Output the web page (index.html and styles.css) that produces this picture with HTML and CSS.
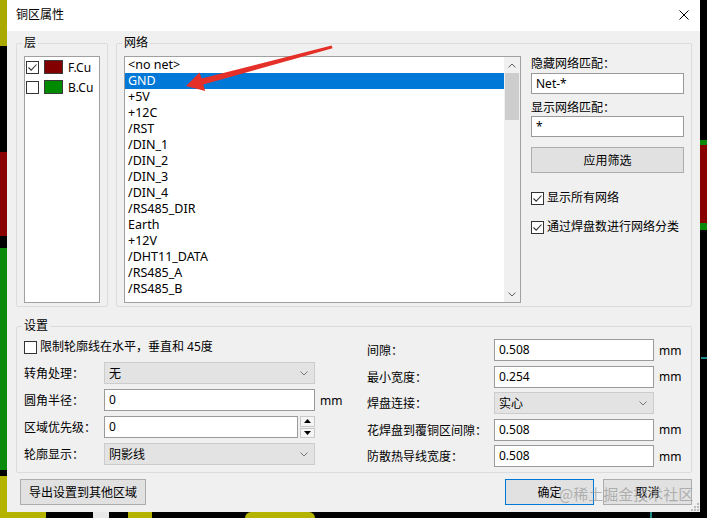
FILE: index.html
```html
<!DOCTYPE html>
<html lang="zh-CN">
<head>
    <meta charset="UTF-8">
    <meta name="viewport" content="width=device-width, initial-scale=1.0">
    <title>铜区属性</title>
    <link rel="stylesheet" href="styles.css">
</head>
<body>
    <!-- PCB canvas peeking out behind the dialog -->
    <div class="pcb">
        <div class="copper y-top-left"></div>
        <div class="copper r-left"></div>
        <div class="copper g-left"></div>
        <div class="copper y-bottom-left"></div>
        <div class="copper y-bottom-1"></div>
        <div class="copper w-bottom"></div>
        <div class="copper y-bottom-2"></div>
        <div class="copper y-bottom-3"></div>
        <div class="copper t-bottom"></div>
        <div class="copper g-right"></div>
        <div class="copper r-right"></div>
        <div class="copper t-right"></div>
    </div>

    <div class="dialog">
        <div class="titlebar">
            <span class="title">铜区属性</span>
            <svg class="close" width="10" height="10" viewBox="0 0 10 10">
                <path d="M0.5 0.5 L9.5 9.5 M9.5 0.5 L0.5 9.5" stroke="#000" stroke-width="1" fill="none"/>
            </svg>
        </div>

        <div class="dialog-body">
            <div class="top-row">
                <fieldset class="group layers">
                    <legend>层</legend>
                    <div class="layer-list">
                        <div class="layer-row">
                            <span class="check"><svg width="11" height="11" viewBox="0 0 11 11"><path d="M1.5 5.5 L4.2 8.2 L9.5 2.5" stroke="#333" stroke-width="1.1" fill="none"/></svg></span>
                            <span class="swatch f-cu"></span>
                            <span class="layer-name">F.Cu</span>
                        </div>
                        <div class="layer-row">
                            <span class="check"></span>
                            <span class="swatch b-cu"></span>
                            <span class="layer-name">B.Cu</span>
                        </div>
                    </div>
                </fieldset>

                <fieldset class="group nets">
                    <legend>网络</legend>
                    <div class="nets-inner">
                        <div class="net-list">
                            <ul class="net-items">
                                <li>&lt;no net&gt;</li>
                                <li class="selected">GND</li>
                                <li>+5V</li>
                                <li>+12C</li>
                                <li>/RST</li>
                                <li>/DIN_1</li>
                                <li>/DIN_2</li>
                                <li>/DIN_3</li>
                                <li>/DIN_4</li>
                                <li>/RS485_DIR</li>
                                <li>Earth</li>
                                <li>+12V</li>
                                <li>/DHT11_DATA</li>
                                <li>/RS485_A</li>
                                <li>/RS485_B</li>
                            </ul>
                            <div class="scrollbar">
                                <div class="scroll-btn">
                                    <svg width="8" height="5" viewBox="0 0 8 5"><path d="M0.5 4.5 L4 1 L7.5 4.5" stroke="#606060" stroke-width="1" fill="none"/></svg>
                                </div>
                                <div class="thumb"></div>
                                <div class="track"></div>
                                <div class="scroll-btn">
                                    <svg width="8" height="5" viewBox="0 0 8 5"><path d="M0.5 0.5 L4 4 L7.5 0.5" stroke="#606060" stroke-width="1" fill="none"/></svg>
                                </div>
                            </div>
                        </div>

                        <div class="filters">
                            <div class="field-label">隐藏网络匹配：</div>
                            <div class="field first">Net-*</div>
                            <div class="field-label second">显示网络匹配：</div>
                            <div class="field">*</div>
                            <div class="btn apply">应用筛选</div>
                            <div class="check-row show-all">
                                <span class="check"><svg width="11" height="11" viewBox="0 0 11 11"><path d="M1.5 5.5 L4.2 8.2 L9.5 2.5" stroke="#333" stroke-width="1.1" fill="none"/></svg></span>
                                <span>显示所有网络</span>
                            </div>
                            <div class="check-row sort-pads">
                                <span class="check"><svg width="11" height="11" viewBox="0 0 11 11"><path d="M1.5 5.5 L4.2 8.2 L9.5 2.5" stroke="#333" stroke-width="1.1" fill="none"/></svg></span>
                                <span>通过焊盘数进行网络分类</span>
                            </div>
                        </div>
                    </div>
                </fieldset>
            </div>

            <fieldset class="group settings">
                <legend>设置</legend>
                <div class="settings-inner">
                    <div class="col-left">
                        <div class="check-row constrain">
                            <span class="check"></span>
                            <span>限制轮廓线在水平，垂直和 45度</span>
                        </div>
                        <div class="form-row">
                            <span class="form-label">转角处理：</span>
                            <div class="combo"><span>无</span><svg width="8" height="5" viewBox="0 0 8 5"><path d="M0.5 0.5 L4 4 L7.5 0.5" stroke="#777" stroke-width="1" fill="none"/></svg></div>
                        </div>
                        <div class="form-row">
                            <span class="form-label">圆角半径：</span>
                            <div class="input">0</div>
                            <span class="unit">mm</span>
                        </div>
                        <div class="form-row">
                            <span class="form-label">区域优先级：</span>
                            <div class="input short">0</div>
                            <div class="spin">
                                <div class="spin-btn"><svg width="7" height="4" viewBox="0 0 7 4"><path d="M0 4 L3.5 0 L7 4 Z" fill="#000"/></svg></div>
                                <div class="spin-btn"><svg width="7" height="4" viewBox="0 0 7 4"><path d="M0 0 L3.5 4 L7 0 Z" fill="#000"/></svg></div>
                            </div>
                        </div>
                        <div class="form-row">
                            <span class="form-label">轮廓显示：</span>
                            <div class="combo"><span>阴影线</span><svg width="8" height="5" viewBox="0 0 8 5"><path d="M0.5 0.5 L4 4 L7.5 0.5" stroke="#777" stroke-width="1" fill="none"/></svg></div>
                        </div>
                    </div>

                    <div class="col-right">
                        <div class="form-row">
                            <span class="form-label">间隙：</span>
                            <div class="input">0.508</div>
                            <span class="unit">mm</span>
                        </div>
                        <div class="form-row">
                            <span class="form-label">最小宽度：</span>
                            <div class="input">0.254</div>
                            <span class="unit">mm</span>
                        </div>
                        <div class="form-row">
                            <span class="form-label">焊盘连接：</span>
                            <div class="combo"><span>实心</span><svg width="8" height="5" viewBox="0 0 8 5"><path d="M0.5 0.5 L4 4 L7.5 0.5" stroke="#777" stroke-width="1" fill="none"/></svg></div>
                        </div>
                        <div class="form-row">
                            <span class="form-label">花焊盘到覆铜区间隙：</span>
                            <div class="input">0.508</div>
                            <span class="unit">mm</span>
                        </div>
                        <div class="form-row">
                            <span class="form-label">防散热导线宽度：</span>
                            <div class="input">0.508</div>
                            <span class="unit">mm</span>
                        </div>
                    </div>
                </div>
            </fieldset>

            <div class="buttons">
                <div class="btn export">导出设置到其他区域</div>
                <div class="spacer"></div>
                <div class="btn ok">确定</div>
                <div class="btn cancel">取消</div>
            </div>
        </div>

        <svg class="grip" width="8" height="8" viewBox="0 0 8 8">
            <rect x="6" y="0" width="2" height="2" fill="#bcbcbc"/>
            <rect x="3" y="3" width="2" height="2" fill="#bcbcbc"/>
            <rect x="6" y="3" width="2" height="2" fill="#bcbcbc"/>
            <rect x="0" y="6" width="2" height="2" fill="#bcbcbc"/>
            <rect x="3" y="6" width="2" height="2" fill="#bcbcbc"/>
            <rect x="6" y="6" width="2" height="2" fill="#bcbcbc"/>
        </svg>
    </div>

    <!-- annotation drawn on top of the screenshot -->
    <svg class="arrow" width="707" height="518" viewBox="0 0 707 518">
        <polygon points="186,86 199.6,72.4 201.6,78.4 331.6,45.6 332.6,48.2 203.2,84.6 205.2,91" fill="#e5302a"/>
    </svg>
    <div class="watermark">@稀土掘金技术社区</div>
</body>
</html>
```

FILE: styles.css
```css
* {
    box-sizing: border-box;
}

body {
    margin: 0;
    width: 707px;
    height: 518px;
    position: relative;
    overflow: hidden;
    background: #000;
    font-family: "Noto Sans", "Noto Sans CJK SC", sans-serif;
    font-size: 12px;
    color: #000;
}

/* ---- PCB behind the window ---- */

.copper {
    position: absolute;
}

.y-top-left {
    left: 0;
    top: 0;
    width: 7px;
    height: 46px;
    background: #a9a900;
}

.r-left {
    left: 0;
    top: 152px;
    width: 7px;
    height: 84px;
    background: #880000;
}

.g-left {
    left: 0;
    top: 248px;
    width: 7px;
    height: 222px;
    background: #0a8a0a;
}

.y-bottom-left {
    left: 0;
    top: 476px;
    width: 7px;
    height: 42px;
    background: #b4b400;
}

.y-bottom-1 {
    left: 0;
    top: 512px;
    width: 46px;
    height: 6px;
    background: #b4b400;
}

.w-bottom {
    left: 93px;
    top: 512px;
    width: 16px;
    height: 6px;
    background: #e8e8e8;
}

.y-bottom-2 {
    left: 128px;
    top: 512px;
    width: 24px;
    height: 6px;
    background: #b4b400;
}

.y-bottom-3 {
    left: 245px;
    top: 512px;
    width: 70px;
    height: 6px;
    border-radius: 35px 35px 0 0;
    background: #b4b400;
}

.t-bottom {
    left: 650px;
    top: 512px;
    width: 2px;
    height: 6px;
    background: #1a8a8a;
}

.g-right {
    left: 700px;
    top: 140px;
    width: 7px;
    height: 90px;
    background: #0a8a0a;
}

.r-right {
    left: 700px;
    top: 145px;
    width: 7px;
    height: 78px;
    background: #880000;
}

.t-right {
    left: 701px;
    top: 357px;
    width: 6px;
    height: 2px;
    background: #1a8a8a;
}

/* ---- dialog window ---- */

.dialog {
    position: relative;
    z-index: 1;
    width: 693px;
    height: 512px;
    margin-left: 7px;
    background: #f0f0f0;
    display: flex;
    flex-direction: column;
}

.titlebar {
    height: 31px;
    background: #fff;
    display: flex;
    align-items: center;
    justify-content: space-between;
    padding: 0 11px 1px 9px;
}

.title {
    line-height: 16px;
}

.dialog-body {
    flex: 1;
    padding: 4px 8px 5px 9px;
    display: flex;
    flex-direction: column;
}

.group {
    margin: 0;
    min-width: 0;
    border: 1px solid #dcdcdc;
    border-radius: 2px;
    padding: 5px 7px 3px 7px;
}

.group legend {
    padding: 0 2px;
    margin-left: -2px;
    line-height: 16px;
}

.top-row {
    display: flex;
    gap: 8px;
}

.layers {
    width: 92px;
}

.nets {
    width: 576px;
}

.nets-inner {
    display: flex;
    gap: 10px;
}

/* checkboxes */

.check {
    width: 13px;
    height: 13px;
    flex: none;
    border: 1px solid #333;
    background: #fff;
    display: flex;
    align-items: center;
    justify-content: center;
}

.check-row {
    display: flex;
    align-items: center;
    gap: 3px;
    height: 16px;
    line-height: 16px;
}

/* layer list */

.layer-list {
    height: 247px;
    background: #fff;
    border: 1px solid #a0a0a0;
}

.layer-row {
    height: 20px;
    display: flex;
    align-items: center;
    padding-left: 1px;
}

.swatch {
    width: 19px;
    height: 14px;
    margin-left: 5px;
    border: 1px solid #3a3a3a;
}

.f-cu {
    background: #820000;
}

.b-cu {
    background: #008a00;
}

.layer-name {
    margin-left: 5px;
}

/* net list */

.net-list {
    width: 397px;
    height: 247px;
    border: 1px solid #a0a0a0;
    background: #fff;
    display: flex;
}

.net-items {
    flex: 1;
    list-style: none;
    margin: 0;
    padding: 0;
    font-size: 12.5px;
}

.net-items li {
    height: 16px;
    line-height: 16px;
    padding-left: 3px;
}

.net-items li.selected {
    background: #0078d7;
    color: #fff;
}

.scrollbar {
    width: 16px;
    background: #f0f0f0;
    display: flex;
    flex-direction: column;
}

.scroll-btn {
    height: 16px;
    display: flex;
    align-items: center;
    justify-content: center;
}

.thumb {
    height: 47px;
    margin: 0 1px;
    background: #cdcdcd;
}

.track {
    flex: 1;
}

/* filter column */

.filters {
    width: 153px;
    display: flex;
    flex-direction: column;
}

.field-label {
    line-height: 16px;
}

.field-label.second {
    margin-top: 6px;
}

.field {
    height: 21px;
    border: 1px solid #9a9a9a;
    background: #fff;
    padding: 0 4px;
    line-height: 19px;
}

.field.first {
    margin-top: 1px;
}

.btn {
    height: 26px;
    background: #e1e1e1;
    border: 1px solid #adadad;
    display: flex;
    align-items: center;
    justify-content: center;
}

.apply {
    margin-top: 10px;
}

.show-all {
    margin-top: 17px;
}

.sort-pads {
    margin-top: 13px;
}

/* settings */

.settings {
    margin-top: 11px;
    padding: 5px 7px 5px 7px;
}

.settings-inner {
    display: flex;
    gap: 23px;
}

.col-left {
    width: 320px;
    display: flex;
    flex-direction: column;
    gap: 5px;
}

.col-left .constrain {
    margin-bottom: 2px;
}

.col-right {
    flex: 1;
    display: flex;
    flex-direction: column;
    gap: 4.5px;
}

.form-row {
    display: flex;
    align-items: center;
    height: 22px;
}

.form-label {
    flex: none;
}

.col-left .form-label {
    width: 80px;
}

.col-right .form-label {
    width: 127px;
}

.input {
    height: 22px;
    border: 1px solid #9a9a9a;
    background: #fff;
    padding: 0 4px;
    line-height: 20px;
}

.combo {
    height: 22px;
    background: #e3e3e3;
    border: 1px solid #cccccc;
    padding: 0 6px 0 4px;
    display: flex;
    align-items: center;
    justify-content: space-between;
}

.col-left .input,
.col-left .combo {
    width: 211px;
}

.col-left .input.short {
    width: 194px;
}

.col-right .input,
.col-right .combo {
    width: 160px;
}

.unit {
    margin-left: 5px;
}

.spin {
    margin-left: 2px;
    width: 15px;
    height: 22px;
    display: flex;
    flex-direction: column;
    gap: 1px;
}

.spin-btn {
    flex: 1;
    background: #f5f5f5;
    border: 1px solid #c8c8c8;
    display: flex;
    align-items: center;
    justify-content: center;
}

/* bottom buttons */

.buttons {
    margin-top: 6px;
    display: flex;
    padding-left: 4px;
}

.export {
    width: 126px;
}

.spacer {
    flex: 1;
}

.ok {
    width: 89px;
    margin-right: 9px;
    border-color: #0078d7;
}

.cancel {
    width: 89px;
}

.grip {
    position: absolute;
    right: 1px;
    bottom: 1px;
}

/* overlays on the screenshot */

.arrow {
    position: absolute;
    left: 0;
    top: 0;
    z-index: 2;
    pointer-events: none;
}

.watermark {
    position: absolute;
    left: 559px;
    top: 485px;
    z-index: 2;
    font-size: 15px;
    line-height: 18px;
    color: rgba(150, 150, 150, 0.7);
    font-family: "Noto Sans CJK SC", sans-serif;
}
```
